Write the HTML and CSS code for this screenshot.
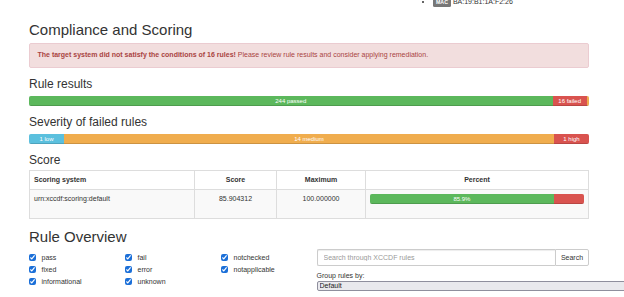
FILE: index.html
```html
<!DOCTYPE html>
<html>
<head>
    <title>Compliance and Scoring</title>
    <link rel="stylesheet" href="styles.css">
</head>
<body>
    <div class="container">
        <div class="top">
            <ul class="addresses">
                <li><span class="label">MAC</span> BA:19:B1:1A:F2:26</li>
            </ul>
        </div>

        <div id="compliance-and-score">
            <h2>Compliance and Scoring</h2>
            <div class="alert">
                <strong>The target system did not satisfy the conditions of 16 rules!</strong> Please review rule results and consider applying remediation.
            </div>

            <h3>Rule results</h3>
            <div class="progress">
                <div class="bar pass" style="width: 93.49%">244 passed</div>
                <div class="bar fail" style="width: 6.13%">16 failed</div>
                <div class="bar warn" style="width: 0.38%"></div>
            </div>

            <h3>Severity of failed rules</h3>
            <div class="progress">
                <div class="bar info" style="width: 6.25%">1 low</div>
                <div class="bar warn" style="width: 87.5%">14 medium</div>
                <div class="bar fail" style="width: 6.25%">1 high</div>
            </div>

            <h3 class="score-title">Score</h3>
            <table class="table">
                <thead>
                    <tr>
                        <th class="col-system">Scoring system</th>
                        <th class="col-score center">Score</th>
                        <th class="col-max center">Maximum</th>
                        <th class="center">Percent</th>
                    </tr>
                </thead>
                <tbody>
                    <tr>
                        <td>urn:xccdf:scoring:default</td>
                        <td class="center">85.904312</td>
                        <td class="center">100.000000</td>
                        <td>
                            <div class="progress">
                                <div class="bar pass" style="width: 85.9%">85.9%</div>
                                <div class="bar fail" style="width: 14.1%"></div>
                            </div>
                        </td>
                    </tr>
                </tbody>
            </table>
        </div>

        <div id="rule-overview">
            <h2>Rule Overview</h2>
            <div class="row">
                <div class="filters">
                    <div class="filter-col">
                        <label class="checkbox"><input type="checkbox" checked> pass</label>
                        <label class="checkbox"><input type="checkbox" checked> fixed</label>
                        <label class="checkbox"><input type="checkbox" checked> informational</label>
                    </div>
                    <div class="filter-col">
                        <label class="checkbox"><input type="checkbox" checked> fail</label>
                        <label class="checkbox"><input type="checkbox" checked> error</label>
                        <label class="checkbox"><input type="checkbox" checked> unknown</label>
                    </div>
                    <div class="filter-col">
                        <label class="checkbox"><input type="checkbox" checked> notchecked</label>
                        <label class="checkbox"><input type="checkbox" checked> notapplicable</label>
                    </div>
                </div>
                <div class="search">
                    <div class="input-group">
                        <input type="text" placeholder="Search through XCCDF rules">
                        <button>Search</button>
                    </div>
                    <label class="group-label" for="groupBy">Group rules by:</label>
                    <select id="groupBy">
                        <option>Default</option>
                    </select>
                </div>
            </div>
        </div>
    </div>
</body>
</html>
```

FILE: styles.css
```css
html, body {
    margin: 0;
    overflow: hidden;
}

body {
    font-family: "Liberation Sans", Arial, sans-serif;
    font-size: 7px;
    line-height: 10px;
    color: #333;
    background: #fff;
}

.container {
    width: 560px;
    padding-left: 29px;
}

.top {
    display: flow-root;
    height: 12px;
}

.addresses {
    margin: -3px 0 0 404px;
    padding: 0;
    list-style: disc;
}

.label {
    display: inline-block;
    background: #777;
    color: #fff;
    font-size: 5.25px;
    font-weight: bold;
    line-height: 1;
    padding: 1px 3px 1.5px;
    border-radius: 1.5px;
}

h2, h3 {
    font-weight: 500;
    line-height: 1.1;
}

h2 {
    font-size: 15px;
    margin: 10px 0 4px;
}

h3 {
    font-size: 12px;
    margin: 9px 0 5px;
}

h3.score-title {
    margin-bottom: 3px;
}

.alert {
    background: #f2dede;
    border: 1px solid #ebccd1;
    color: #a94442;
    padding: 6.5px 7.5px;
    border-radius: 2px;
    margin-bottom: 10px;
}

.progress {
    display: flex;
    height: 10px;
    margin-bottom: 10px;
    background: #f5f5f5;
    border-radius: 2px;
    overflow: hidden;
    box-shadow: inset 0 1px 1px rgba(0,0,0,0.1);
}

.bar {
    height: 10px;
    font-size: 6px;
    line-height: 10px;
    color: #fff;
    text-align: center;
    white-space: nowrap;
    overflow: hidden;
    box-shadow: inset 0 -1px 0 rgba(0,0,0,0.15);
}

.pass { background: #5cb85c; }
.fail { background: #d9534f; }
.warn { background: #f0ad4e; }
.info { background: #5bc0de; }

.table {
    width: 100%;
    table-layout: fixed;
    border-collapse: collapse;
    margin-bottom: 9px;
}

.table th,
.table td {
    border: 1px solid #ddd;
    padding: 4px;
    vertical-align: top;
    text-align: left;
}

.table th {
    font-weight: bold;
}

.table tbody tr {
    background: #f9f9f9;
}

.col-system { width: 156px; }
.col-score { width: 73px; }
.col-max { width: 80px; }

.table .center {
    text-align: center;
}

#rule-overview h2 {
    margin-bottom: 3px;
}

.row {
    display: flex;
    gap: 15px;
}

.filters {
    width: 272.5px;
    flex-shrink: 0;
    display: grid;
    grid-template-columns: repeat(3, 96px);
    padding-top: 4px;
}

.filter-col {
    display: flex;
    flex-direction: column;
    gap: 2px;
}

.checkbox {
    display: flex;
    align-items: center;
    gap: 6px;
    height: 10px;
}

.checkbox input {
    width: 6.5px;
    height: 6.5px;
    margin: 0;
    accent-color: #1b6fd8;
}

.search {
    width: 272.5px;
    flex-shrink: 0;
}

.input-group {
    display: flex;
    height: 17px;
    margin-bottom: 5px;
}

.input-group input {
    flex: 1;
    min-width: 0;
    box-sizing: border-box;
    height: 17px;
    margin: 0;
    padding: 3px 6px;
    font-family: inherit;
    font-size: 7px;
    color: #555;
    border: 1px solid #ccc;
    border-right: none;
    border-radius: 2px 0 0 2px;
    box-shadow: inset 0 1px 1px rgba(0,0,0,0.075);
    outline: none;
}

.input-group input::placeholder {
    color: #999;
}

.input-group button {
    box-sizing: border-box;
    height: 17px;
    width: 34px;
    padding: 0;
    font-family: inherit;
    font-size: 7px;
    color: #333;
    background: #fff;
    border: 1px solid #ccc;
    border-radius: 0 2px 2px 0;
}

.group-label {
    display: block;
    line-height: 10px;
}

select {
    box-sizing: border-box;
    width: 330px;
    height: 10px;
    padding: 0 2px;
    font-family: inherit;
    font-size: 7px;
    line-height: 8px;
    color: #222;
    background: #e9e9ed;
    border: 1px solid #8f8f9d;
    border-radius: 2px;
    appearance: none;
}
```
